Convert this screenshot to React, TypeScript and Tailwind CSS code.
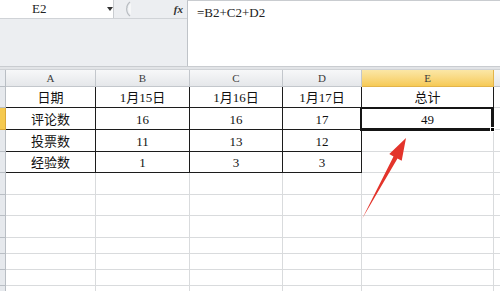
import React from "react";

const cols = ["A", "B", "C", "D", "E"];
const data: string[][] = [
  ["日期", "1月15日", "1月16日", "1月17日", "总计"],
  ["评论数", "16", "16", "17", "49"],
  ["投票数", "11", "13", "12", ""],
  ["经验数", "1", "3", "3", ""],
];
const totalRows = 11;

const font = { fontFamily: '"Liberation Serif", "Noto Sans CJK SC", serif' };

export default function App() {
  const cells: React.ReactNode[] = [];
  cells.push(
    <div key="corner" className="border-r border-b border-[#b9bec4] bg-[#e9ecf0]" />
  );
  cols.forEach((c) => {
    const sel = c === "E";
    cells.push(
      <div
        key={"h" + c}
        className={
          "flex items-center justify-center border-r border-b text-[11px] text-[#3c3c3c] " +
          (sel
            ? "bg-gradient-to-b from-[#fbe7a6] to-[#f6ca55] border-[#e3b44a]"
            : "bg-gradient-to-b from-[#f7f8f9] to-[#e5e7ea] border-[#c3c7cc]")
        }
      >
        {c}
      </div>
    );
  });
  cells.push(
    <div key="hF" className="border-b border-[#c3c7cc] bg-gradient-to-b from-[#f7f8f9] to-[#e5e7ea]" />
  );

  for (let r = 0; r < totalRows; r++) {
    cells.push(
      <div
        key={"rh" + r}
        className={
          "border-r border-b " +
          (r === 1
            ? "bg-[#f5c94e] border-[#d9a83a]"
            : "bg-[#e6e9ed] border-[#b9bec4]")
        }
      />
    );
    for (let c = 0; c < 5; c++) {
      const inTable = r < 4 && c < 4;
      const isE1 = r === 0 && c === 4;
      const isE2 = r === 1 && c === 4;
      const txt = r < 4 ? data[r][c] : "";
      let border = "border-[#d9dbdd]";
      if (inTable || isE1) border = "border-[#1c1c1c]";
      cells.push(
        <div
          key={"c" + r + "-" + c}
          className={
            "relative flex items-end justify-center border-r border-b bg-white text-[13px] leading-[16px] text-[#111] pb-[1px] " +
            border +
            (isE2 ? " z-10" : "")
          }
        >
          {txt}
          {isE2 && (
            <div className="absolute -top-[1px] -left-[2px] -right-[1px] -bottom-[2px] border-t-2 border-l-2 border-b-[3px] border-r-[3px] border-[#151515]">
              <div className="absolute -right-[4px] -bottom-[4px] w-[5px] h-[5px] bg-black border border-white" />
            </div>
          )}
        </div>
      );
    }
    cells.push(<div key={"f" + r} className="border-b border-[#d9dbdd] bg-white" />);
  }

  return (
    <div className="relative w-[500px] h-[291px] overflow-hidden bg-white" style={font}>
      {/* formula bar */}
      <div className="flex h-[67px] border-b border-[#c9ccd0]">
        <div className="w-[187px] flex flex-col bg-[#eceef1]">
          <div className="flex h-[19px] items-center border-b border-[#d0d3d7]">
            <div className="relative w-[114px] h-full bg-white flex items-center pl-[32px] border-r border-[#c9ccd0] text-[13px] text-[#222]">
              E2
              <svg className="absolute left-[107px] top-[7px]" width="6" height="4" viewBox="0 0 6 4">
                <path d="M0 0 H6 L3 4 Z" fill="#333" />
              </svg>
            </div>
            <svg className="ml-[4px]" width="14" height="16" viewBox="0 0 14 16">
              <path d="M12 1 A9 9 0 0 0 12 15" fill="none" stroke="#b9bdc2" strokeWidth="1.2" />
              <path d="M13 2 A8 8 0 0 0 13 14 Z" fill="#f6f7f8" />
              <circle cx="9" cy="6" r="1" fill="#c8ccd0" />
            </svg>
            <div className="ml-auto mr-[4px] italic font-bold text-[11px] text-[#333]">fx</div>
          </div>
          <div className="flex-1" />
        </div>
        <div className="flex-1 bg-white border-l border-[#bfc3c8] border-t border-t-[#c9ccd0] pl-[9px] pt-[4px] text-[13px] leading-[16px] text-[#222]">
          =B2+C2+D2
        </div>
      </div>
      <div className="h-[3px] bg-[#e2e4e7] border-b border-[#cfd2d6]" />

      {/* grid */}
      <div className="grid grid-cols-[6px_90px_94px_93px_79px_132px_6px] grid-rows-[17px_21px_22px_22px_21px_22px_21px_22px_16px_16px_16px_16px]">
        {cells}
      </div>

      {/* red arrow */}
      <svg className="absolute left-0 top-0 pointer-events-none" width="500" height="291" viewBox="0 0 500 291">
        <polygon
          points="362,219 393.5,156.4 389.3,154.1 406,138 401.7,160.7 397.5,158.6"
          fill="#e3342b"
        />
      </svg>
    </div>
  );
}
